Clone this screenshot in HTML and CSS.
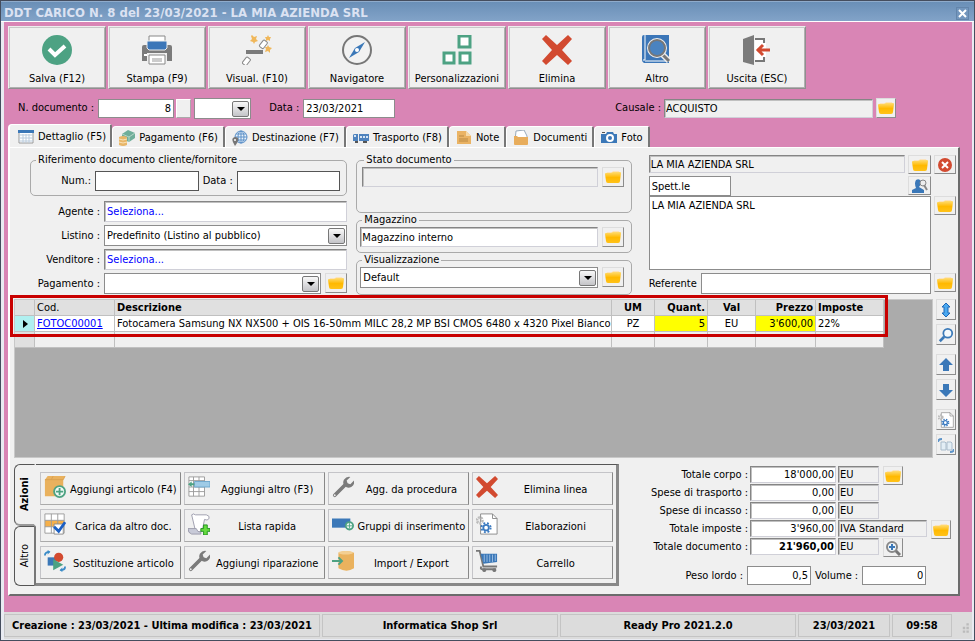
FILE: index.html
```
<!DOCTYPE html>
<html lang="it">
<head>
  <meta charset="UTF-8">
  <meta name="viewport" content="width=device-width, initial-scale=1.0">
  <title>DDT CARICO N. 8 del 23/03/2021 - LA MIA AZIENDA SRL</title>
  <link rel="stylesheet" href="styles.css">
</head>
<body>

  <!-- shared icons -->
  <svg class="sprite" aria-hidden="true">
    <linearGradient id="gold" x1="0" y1="0" x2="0" y2="1">
      <stop offset="0" stop-color="#ffdc73"/>
      <stop offset="0.5" stop-color="#ffb900"/>
      <stop offset="1" stop-color="#ffc21a"/>
    </linearGradient>
    <symbol id="folder" viewBox="0 0 16 16">
      <path d="M1 5l1-2h5l1-1h6l1 3v2H1z" fill="#fbe3bd"/>
      <path d="M0 5q0-1 1-1h5l2-1h7q1 0 1 1l-1 8q0 2-2 2H3q-2 0-2-2z" fill="url(#gold)"/>
    </symbol>
    <symbol id="cross" viewBox="0 0 30 30">
      <path d="M4 0l11 10L26 0l4 4-10 11 10 11-4 4-11-10L4 30l-4-4 10-11L0 4z" fill="#d24a30"/>
    </symbol>
    <symbol id="wrench" viewBox="0 0 24 24">
      <path d="M3 21L15 9" stroke="#7b7b7b" stroke-width="4" stroke-linecap="round"/>
      <path d="M20 1l-4 4 1 3 3 1 4-4q1 5-3 7-4 2-7-1-3-3-1-7 3-4 7-3z" fill="#7b7b7b"/>
      <circle cx="3" cy="21" r="1" fill="#eee"/>
    </symbol>
    <symbol id="lens" viewBox="0 0 18 18">
      <circle cx="11" cy="7" r="5" fill="#f5fafd" stroke="#3b7ab8" stroke-width="2"/>
      <path d="M7 11l-5 5" stroke="#3b7ab8" stroke-width="3"/>
    </symbol>
    <symbol id="up" viewBox="0 0 16 16">
      <path d="M8 1l7 7h-4v6H5V8H1z" fill="#3b78b8"/>
    </symbol>
    <symbol id="cog" viewBox="0 0 24 24">
      <path d="M5 1h13l5 5v17H5z" fill="#fff" stroke="#888"/>
      <path d="M18 1v5h5" fill="none" stroke="#888"/>
      <circle cx="4" cy="8" r="3" fill="none" stroke="#bbb" stroke-width="3" stroke-dasharray="2 1"/>
      <circle cx="11" cy="16" r="3" fill="#fff" stroke="#3b7ac0" stroke-width="2"/>
      <circle cx="11" cy="16" r="5" fill="none" stroke="#3b7ac0" stroke-width="2" stroke-dasharray="2 2"/>
    </symbol>
  </svg>

  <div class="window">
    <header class="titlebar">
      <h1>DDT CARICO N. 8 del 23/03/2021 - LA MIA AZIENDA SRL</h1>
      <button class="close" aria-label="Chiudi">
        <svg viewBox="0 0 9 9"><path d="M1 1l7 7M8 1L1 8" stroke="#fff" stroke-width="2"/></svg>
      </button>
    </header>

    <main>
      <nav class="toolbar">
        <button>
          <svg viewBox="0 0 30 30"><circle cx="15" cy="15" r="15" fill="#4da283"/><path d="M7 14l6 6 10-9" fill="none" stroke="#fff" stroke-width="4"/></svg>
          Salva (F12)
        </button>
        <button>
          <svg viewBox="0 0 30 30">
            <path d="M2 10h26q2 0 2 2v14H0V12q0-2 2-2z" fill="#7b7b7b"/>
            <path d="M7 1h16v6H7z" fill="#fff" stroke="#888"/>
            <path d="M6 19h18v10H6z" fill="#fff" stroke="#f0f0f0" stroke-width="2"/><path d="M7 20h16v9H7z" fill="#fff" stroke="#888"/>
            <path d="M5 6h20v7l-2 2H7l-2-2z" fill="#3b76b8" stroke="#eee"/>
            <path d="M10 24h10M10 26h10" stroke="#999"/><path d="M2 20h3" stroke="#fff" stroke-width="2"/>
          </svg>
          Stampa (F9)
        </button>
        <button>
          <svg viewBox="0 0 30 30">
            <path d="M4 15h17v4H4z" fill="#7b7b7b"/>
            <g fill="#fff" stroke="#888"><rect x="-2" y="-4" width="5" height="8" rx="1" transform="translate(21 9) rotate(38)"/><rect x="-2" y="-4" width="5" height="8" rx="1" transform="translate(4 26) rotate(38)"/></g>
            <path d="M10 0l2 2 3-1-1 3 2 2-3 1-1 2-1-2-3-1 2-2-1-3zM26 0l1 2 2 0-1 2 0 2-2-1-2 1 0-2-1-2 2 0zM26 10l1 2 3 1-2 2 0 3-2-2-3 1 1-3-1-2 2 0z" fill="#f0b75a"/>
          </svg>
          Visual. (F10)
        </button>
        <button>
          <svg viewBox="0 0 30 30"><circle cx="15" cy="15" r="14" fill="#f2f2f2" stroke="#777" stroke-width="2"/><path d="M23 7l-6 10L7 23l6-10z" fill="#3b78b8"/><circle cx="15" cy="15" r="2" fill="#fff"/></svg>
          Navigatore
        </button>
        <button>
          <svg viewBox="0 0 30 30"><path d="M17 1h11v11H17zM2 18h10v10H2zM18 18h10v10H18z" fill="#fff" stroke="#4da283" stroke-width="3"/></svg>
          Personalizzazioni
        </button>
        <button>
          <svg><use href="#cross"/></svg>
          Elimina
        </button>
        <button>
          <svg viewBox="0 0 30 30">
            <path d="M2 0h25v28H2q-2-1-2-3V2q0-2 2-2z" fill="#3b76b8"/><path d="M3 0v25H1M3 26h23" stroke="#fff" fill="none"/>
            <path d="M20 19l7 7" stroke="#eee" stroke-width="6"/><path d="M20 19l7 7" stroke="#777" stroke-width="3"/>
            <circle cx="15" cy="13" r="8" fill="#3b76b8" stroke="#eee" stroke-width="4"/><circle cx="15" cy="13" r="8" fill="#4a83c0" stroke="#777" stroke-width="2"/>
          </svg>
          Altro
        </button>
        <button>
          <svg viewBox="0 0 30 30">
            <path d="M13 4h9v22h-9" fill="#fff" stroke="#777" stroke-width="2"/>
            <path d="M20 8h4v14h-4z" fill="#fff"/>
            <path d="M1 4l11-4v30L1 27z" fill="#7b7b7b"/>
            <path d="M15 15h13M21 10l-5 5 5 5" fill="none" stroke="#d24a30" stroke-width="3"/>
          </svg>
          Uscita (ESC)
        </button>
      </nav>

      <div class="docrow">
        <label for="ndoc">N. documento :</label>
        <input class="ndoc num" id="ndoc" value="8">
        <button class="blank" aria-label="Numerazione"></button>
        <span class="select serie"><select aria-label="Serie"><option></option></select></span>
        <label class="l-data" for="data">Data :</label>
        <input class="data" id="data" value="23/03/2021">
        <div class="causale">
          <label for="causale">Causale :</label>
          <input class="sunken" id="causale" value="ACQUISTO" readonly>
          <button class="mini" aria-label="Scegli causale"><svg><use href="#folder"/></svg></button>
        </div>
      </div>

      <div class="tabs" role="tablist">
        <button class="tab active" role="tab" aria-selected="true">
          <svg viewBox="0 0 16 16"><path d="M1 2h14v12H1z" fill="#fff" stroke="#999"/><path d="M1 6h14M1 9h14M1 12h14M5 5v9M8 5v9M11 5v9" stroke="#bcd"/><path d="M0 1h16v3H0z" fill="#3b78b8"/></svg>
          Dettaglio (F5)
        </button>
        <button class="tab" role="tab">
          <svg viewBox="0 0 16 16"><path d="M3 4l6-4 7 3v5l-6 4-7-3z" fill="#6fae9a"/><path d="M3 4l7 3 6-4M10 7v5" stroke="#b5d5c8" fill="none"/><path d="M0 7q4-2 8 0v8q-4 2-8 0z" fill="#e8b668"/><path d="M0 9q4 2 8 0M0 12q4 2 8 0" stroke="#f8e2b8" fill="none"/></svg>
          Pagamento (F6)
        </button>
        <button class="tab" role="tab">
          <svg viewBox="0 0 16 16"><circle cx="9" cy="7" r="6" fill="#eaf3fa" stroke="#5c90c8"/><path d="M3 7h12M9 1v12M4 4h10M4 10h10" stroke="#5c90c8"/><ellipse cx="9" cy="7" rx="3" ry="6" fill="none" stroke="#5c90c8"/><path d="M3 16Q-1 10 1 8q2-2 5 0 1 3-3 8z" fill="#777"/><circle cx="3" cy="10" r="1" fill="#fff"/></svg>
          Destinazione (F7)
        </button>
        <button class="tab" role="tab">
          <svg viewBox="0 0 16 16"><path d="M0 5q0-1 2-1h3v7H0zM6 4h10v7H6z" fill="#4e82bd"/><path d="M1 6h3M7 7h8" stroke="#d5e4f3" stroke-width="2" stroke-dasharray="2 1"/><path d="M2 12h3M10 12h4" stroke="#555" stroke-width="2"/></svg>
          Trasporto (F8)
        </button>
        <button class="tab" role="tab">
          <svg viewBox="0 0 16 16"><path d="M1 1h9l5 5v8H1z" fill="#eab364"/><path d="M10 1v5h5" fill="#f6d9a8"/><path d="M3 6h5M3 9h9M3 11h9" stroke="#b98945"/></svg>
          Note
        </button>
        <button class="tab" role="tab">
          <svg viewBox="0 0 16 16"><path d="M3 1l8-1 3 6v5H2z" fill="#fff" stroke="#9ab"/><path d="M1 6h3l1 1h10v7q0 1-1 1H2q-1 0-1-1z" fill="#e8ad5c"/></svg>
          Documenti
        </button>
        <button class="tab" role="tab">
          <svg viewBox="0 0 16 16"><path d="M0 4h5l1-2h6l1 2h3v9H0z" fill="#3b78b8"/><path d="M1 2h3v1H1z" fill="#555"/><circle cx="9" cy="8" r="3" fill="#3b78b8" stroke="#fff" stroke-width="2"/></svg>
          Foto
        </button>
      </div>

      <section class="panel">
        <div class="details">
          <div class="col-rif">
            <fieldset class="rif">
              <legend>Riferimento documento cliente/fornitore</legend>
              <label for="rnum">Num.:</label>
              <input id="rnum">
              <label for="rdata">Data :</label>
              <input id="rdata">
            </fieldset>
            <div class="line">
              <label for="agente">Agente :</label>
              <input class="sunken link" id="agente" value="Seleziona...">
            </div>
            <div class="line">
              <label for="listino">Listino :</label>
              <span class="select"><select id="listino"><option>Predefinito (Listino al pubblico)</option></select></span>
            </div>
            <div class="line">
              <label for="venditore">Venditore :</label>
              <input class="sunken link" id="venditore" value="Seleziona...">
            </div>
            <div class="line">
              <label for="pagamento">Pagamento :</label>
              <span class="select"><select id="pagamento"><option></option></select></span>
              <button class="mini wide" aria-label="Scegli pagamento"><svg><use href="#folder"/></svg></button>
            </div>
          </div>

          <div class="col-stato">
            <fieldset class="stato">
              <legend>Stato documento</legend>
              <input class="sunken" aria-label="Stato documento" readonly>
              <button class="mini wide" aria-label="Scegli stato"><svg><use href="#folder"/></svg></button>
            </fieldset>
            <fieldset>
              <legend>Magazzino</legend>
              <input class="sunken white" aria-label="Magazzino" value="Magazzino interno">
              <button class="mini wide" aria-label="Scegli magazzino"><svg><use href="#folder"/></svg></button>
            </fieldset>
            <fieldset class="vis">
              <legend>Visualizzazione</legend>
              <span class="select"><select aria-label="Visualizzazione"><option>Default</option></select></span>
              <button class="mini wide" aria-label="Scegli visualizzazione"><svg><use href="#folder"/></svg></button>
            </fieldset>
          </div>

          <div class="col-cliente">
            <input class="sunken c-nome" aria-label="Ragione sociale" value="LA MIA AZIENDA SRL" readonly>
            <button class="mini" aria-label="Apri cliente"><svg><use href="#folder"/></svg></button>
            <button class="mini" aria-label="Rimuovi cliente">
              <svg viewBox="0 0 16 16"><circle cx="8" cy="8" r="7" fill="#d24a30"/><path d="M5 5l6 6M11 5l-6 6" stroke="#fff" stroke-width="2"/></svg>
            </button>
            <input class="c-titolo" aria-label="Titolo" value="Spett.le">
            <button class="mini c-cerca" aria-label="Cerca cliente">
              <svg viewBox="0 0 16 16"><path d="M4 2q3-2 5 1 0 4-2 6l5 3v3H0v-3l4-2Q2 5 4 2z" fill="#3b78b8"/><circle cx="11" cy="5" r="3" fill="#eee" stroke="#888"/><path d="M12 7l3 5" stroke="#888" stroke-width="2"/></svg>
            </button>
            <textarea class="c-ind" aria-label="Indirizzo">LA MIA AZIENDA SRL</textarea>
            <button class="mini" aria-label="Scegli indirizzo"><svg><use href="#folder"/></svg></button>
            <div class="c-ref">
              <label for="referente">Referente</label>
              <input id="referente">
            </div>
            <button class="mini" aria-label="Scegli referente"><svg><use href="#folder"/></svg></button>
          </div>
        </div>

        <div class="gridrow">
          <div class="grid">
            <table>
              <colgroup>
                <col class="w-sel"><col class="w-cod"><col><col class="w-um"><col class="w-qta"><col class="w-val"><col class="w-prz"><col class="w-imp">
              </colgroup>
              <thead>
                <tr><th></th><th class="plain">Cod.</th><th>Descrizione</th><th class="mid">UM</th><th class="num">Quant.</th><th class="mid">Val</th><th class="num">Prezzo</th><th>Imposte</th></tr>
              </thead>
              <tbody>
                <tr>
                  <td class="current"><svg viewBox="0 0 6 8"><path d="M0 0l5 4-5 4z"/></svg></td>
                  <td><a href="#">FOTOC00001</a></td>
                  <td>Fotocamera Samsung NX NX500 + OIS 16-50mm MILC 28,2 MP BSI CMOS 6480 x 4320 Pixel Bianco</td>
                  <td class="mid">PZ</td>
                  <td class="num yellow">5</td>
                  <td class="mid">EU</td>
                  <td class="num yellow">3'600,00</td>
                  <td>22%</td>
                </tr>
                <tr class="empty"><td></td><td></td><td></td><td></td><td></td><td></td><td></td><td></td></tr>
              </tbody>
            </table>
            <div class="highlight"></div>
          </div>
          <div class="side">
            <button class="mini" aria-label="Altezza righe"><svg viewBox="0 0 16 16"><path d="M8 1l4 4h-2v6h2l-4 4-4-4h2V5H4z" fill="#4aa8f0" stroke="#1d68b8"/></svg></button>
            <button class="mini gap" aria-label="Cerca"><svg><use href="#lens"/></svg></button>
            <button class="mini" aria-label="Sposta su"><svg><use href="#up"/></svg></button>
            <button class="mini gap" aria-label="Sposta giù"><svg class="flip"><use href="#up"/></svg></button>
            <button class="mini" aria-label="Elabora riga"><svg><use href="#cog"/></svg></button>
            <button class="mini" aria-label="Duplica riga">
              <svg viewBox="0 0 16 16"><path d="M3 5h4l1 1v7H3zM9 5h4l1 1v7H9z" fill="#e3eef5" stroke="#a9bccb"/><path d="M0 5q0-3 4-3M16 12q0 3-4 3" fill="none" stroke="#5d93c8" stroke-width="2"/></svg>
            </button>
          </div>
        </div>

        <div class="bottom">
          <div class="actions">
            <div class="vtabs" role="tablist">
              <button class="vtab active" role="tab" aria-selected="true"><span>Azioni</span></button>
              <button class="vtab" role="tab"><span>Altro</span></button>
            </div>
            <div class="cmds">
              <button>
                <svg viewBox="0 0 24 24"><path d="M1 4l3-4h19l-2 4v18H1z" fill="#e9b15e"/><path d="M1 4h20l2-4M8 4l2-4" stroke="#d9a04e" fill="none"/><circle cx="17" cy="17" r="6" fill="#f3fbf7" stroke="#4da283" stroke-width="2"/><path d="M17 13v8M13 17h8" stroke="#4da283" stroke-width="2"/></svg>
                <span>Aggiungi articolo (F4)</span>
              </button>
              <button>
                <svg viewBox="0 0 24 24"><path d="M1 1h17v21H1zM1 5h17M1 12h17M1 17h17M6 1v21M12 1v21" fill="#fff" stroke="#999"/><path d="M7 6h17v6H7z" fill="#9fcbe6" stroke="#6ba5cc"/><path d="M0 9l4-3v2h3v2H4v2z" fill="#4da283"/></svg>
                <span>Aggiungi altro (F3)</span>
              </button>
              <button><svg><use href="#wrench"/></svg><span>Agg. da procedura</span></button>
              <button><svg><use href="#cross"/></svg><span>Elimina linea</span></button>
              <button>
                <svg viewBox="0 0 24 24"><path d="M1 1h21v21H1z" fill="#fff"/><path d="M1 8h21v7H1z" fill="#f6b04a"/><path d="M1 1h21v21H1zM1 8h21M1 15h21M8 1v21M15 1v21" fill="none" stroke="#999"/><path d="M11 12h10v11H11z" fill="#fff" stroke="#888"/><path d="M11 15l5 5 7-10" stroke="#1b5fc4" stroke-width="3" fill="none"/></svg>
                <span>Carica da altro doc.</span>
              </button>
              <button>
                <svg viewBox="0 0 24 24"><path d="M4 2q2-2 4 0h12q4 1 3 4-2 3-5 1l-2 10q-1 4-5 4L8 19z" fill="#fff" stroke="#99a"/><path d="M0 17h9q1 4 5 4v2H4q-4-1-4-6z" fill="#c8cad8" stroke="#99a"/><path d="M17 13h4v4h3v3h-3v4h-4v-4h-3v-3h3z" fill="#67dc3f" stroke="#1d8f1d"/></svg>
                <span>Lista rapida</span>
              </button>
              <button>
                <svg viewBox="0 0 24 24"><path d="M0 6h20v10H0z" fill="#3b78b8"/><circle cx="19" cy="14" r="4" fill="#f3fbf7" stroke="#4da283" stroke-width="2"/><path d="M19 11v6M16 14h6" stroke="#4da283"/></svg>
                <span>Gruppi di inserimento</span>
              </button>
              <button><svg><use href="#cog"/></svg><span>Elaborazioni</span></button>
              <button>
                <svg viewBox="0 0 24 24"><path d="M4 8h9v9H4z" fill="#3b78b8"/><circle cx="16" cy="8" r="5" fill="#d24a30"/><path d="M10 10l11 6-11 6z" fill="#4da283"/><path d="M1 6q0-4 5-4M23 18q0 4-5 4" fill="none" stroke="#3b8cc8" stroke-width="2"/><path d="M4 0l3 2-3 3zM20 19l-3 3 3 2z" fill="#3b8cc8"/></svg>
                <span>Sostituzione articolo</span>
              </button>
              <button><svg><use href="#wrench"/></svg><span>Aggiungi riparazione</span></button>
              <button>
                <svg viewBox="0 0 24 24"><path d="M7 3q8-4 17 0v17q-8 5-17 0z" fill="#eab25e"/><ellipse cx="15" cy="3" rx="8" ry="2" fill="#f4cf92"/><path d="M0 12h10M7 8l4 4-4 4" fill="none" stroke="#4da283" stroke-width="2"/></svg>
                <span>Import / Export</span>
              </button>
              <button>
                <svg viewBox="0 0 24 24"><path d="M0 1h4l4 17h15M6 18q-2 3 1 3h15" fill="none" stroke="#777" stroke-width="2"/><path d="M5 4h18v9L8 15z" fill="#3b78b8"/><path d="M9 5v8M12 5v8M15 5v8M18 5v8M21 5v7" stroke="#9cc0e4"/><circle cx="9" cy="22" r="2" fill="#777"/><circle cx="20" cy="22" r="2" fill="#777"/></svg>
                <span>Carrello</span>
              </button>
            </div>
          </div>

          <div class="totals">
            <div class="tot">
              <label for="t1">Totale corpo :</label>
              <input class="sunken white num" id="t1" value="18'000,00">
              <input class="sunken val" aria-label="Valuta corpo" value="EU" readonly>
              <button class="mini" aria-label="Dettaglio corpo"><svg><use href="#folder"/></svg></button>
            </div>
            <div class="tot">
              <label for="t2">Spese di trasporto :</label>
              <input class="sunken white num" id="t2" value="0,00">
              <input class="sunken val" aria-label="Valuta trasporto" value="EU" readonly>
            </div>
            <div class="tot">
              <label for="t3">Spese di incasso :</label>
              <input class="sunken white num" id="t3" value="0,00">
              <input class="sunken val" aria-label="Valuta incasso" value="EU" readonly>
            </div>
            <div class="tot">
              <label for="t4">Totale imposte :</label>
              <input class="sunken white num" id="t4" value="3'960,00">
              <input class="sunken iva" aria-label="Tipo IVA" value="IVA Standard" readonly>
              <button class="mini" aria-label="Dettaglio imposte"><svg><use href="#folder"/></svg></button>
            </div>
            <div class="tot">
              <label for="t5">Totale documento :</label>
              <input class="sunken white num strong" id="t5" value="21'960,00">
              <input class="sunken val" aria-label="Valuta documento" value="EU" readonly>
              <button class="mini" aria-label="Analisi totale">
                <svg viewBox="0 0 16 16"><path d="M10 10l5 5" stroke="#777" stroke-width="3"/><circle cx="7" cy="7" r="5" fill="#eef5fa" stroke="#888" stroke-width="2"/><path d="M7 4v6M4 7h6" stroke="#3b78b8" stroke-width="2"/></svg>
              </button>
            </div>
            <div class="peso">
              <label for="peso">Peso lordo :</label>
              <input class="num" id="peso" value="0,5">
              <label for="volume">Volume :</label>
              <input class="num" id="volume" value="0">
            </div>
          </div>
        </div>
      </section>
    </main>

    <footer class="status">
      <span class="s-mod">Creazione : 23/03/2021 - Ultima modifica : 23/03/2021</span>
      <span class="s-mid">Informatica Shop Srl</span>
      <span class="s-mid">Ready Pro 2021.2.0</span>
      <span class="s-date">23/03/2021</span>
      <span class="s-time">09:58</span>
      <svg class="grip" viewBox="0 0 10 10"><path d="M7 1h2v2H7zM4 4h2v2H4zM7 4h2v2H7zM4 7h2v2H4zM7 7h2v2H7z" fill="#bbb"/></svg>
    </footer>
  </div>

</body>
</html>
```
FILE: styles.css
```
* {
  box-sizing: border-box;
}

body {
  margin: 0;
  font: 11px/14px "DejaVu Sans Condensed", "DejaVu Sans", sans-serif;
  color: #000;
}

button, input, select, textarea {
  font: inherit;
  color: inherit;
  margin: 0;
  padding: 0;
  border-radius: 0;
}

input, textarea, select {
  background: #fff;
  border: 1px solid #8c8c8c;
  min-width: 0;
  padding: 0 2px;
}

label {
  white-space: nowrap;
}

svg {
  display: block;
  fill: none;
}

.sprite {
  position: absolute;
  width: 0;
  height: 0;
}

.num {
  text-align: right;
}

/* window frame */
.window {
  min-height: 100vh;
  display: flex;
  flex-direction: column;
  border: 1px solid #454d5e;
  background: #e9ebf2;
}

.titlebar {
  display: flex;
  align-items: center;
  justify-content: space-between;
  height: 21px;
  padding: 3px 6px 0 3px;
  background: linear-gradient(#6a8fb7, #82a3c8);
  border-top: 1px solid #8fabcb;
  border-bottom: 1px solid #fff;
}

.titlebar h1 {
  margin: 0;
  font-size: 13px;
  color: #dbe2f2;
}

.close {
  width: 11px;
  height: 11px;
  padding: 1px;
  background: #7396bd;
  border: 0;
  outline: 1px solid #6385ab;
}

main {
  flex: 1;
  display: flex;
  flex-direction: column;
  margin: 0 2px 0 3px;
  padding: 4px 12px 16px 4px;
  background: #d985b5;
}

/* toolbar */
.toolbar {
  display: flex;
  gap: 2px;
}

.toolbar button {
  display: flex;
  flex-direction: column;
  align-items: center;
  gap: 7px;
  width: 98px;
  height: 63px;
  padding-top: 8px;
  background: #f0f0f0;
  border: 1px solid;
  border-color: #eee #8f8f8f #8f8f8f #eee;
  box-shadow: inset 1px 1px #c8c8c8, inset -1px -1px #b0b0b0;
}

.toolbar svg {
  width: 30px;
  height: 30px;
}

/* document header */
.docrow {
  display: flex;
  align-items: center;
  height: 20px;
  margin: 9px 0 6px 10px;
}

.docrow input {
  height: 19px;
}

.ndoc {
  width: 76px;
  margin: 0 2px 0 4px;
}

.blank {
  width: 15px;
  height: 19px;
  margin-right: 3px;
  background: #f0f0f0;
  border: 1px solid #aaa;
  border-left-color: #fff;
  border-top-color: #fff;
}

.serie {
  width: 57px;
}

.l-data {
  margin: 0 4px 0 18px;
}

.data {
  width: 92px;
}

.causale {
  display: flex;
  align-items: center;
  gap: 3px;
  margin: 0 64px 0 auto;
}

.causale input {
  width: 209px;
}

.select {
  position: relative;
  display: flex;
  height: 21px;
  flex: 1;
}

.serie.select {
  flex: none;
}

.select select {
  appearance: none;
  width: 100%;
}

.select::after {
  content: "";
  position: absolute;
  top: 3px;
  right: 2px;
  width: 15px;
  bottom: 2px;
  border: 1px solid #777;
  border-radius: 2px;
  background: linear-gradient(#f8f8f8, #c4c4c8);
  pointer-events: none;
}

.select::before {
  content: "";
  position: absolute;
  z-index: 1;
  right: 6px;
  top: 9px;
  border: 4px solid transparent;
  border-top-color: #000;
  border-bottom: 0;
  pointer-events: none;
}

.sunken {
  background: #f0f0f0;
  border: 1px solid;
  border-color: #858585 #d0d0d8 #d0d0d8 #858585;
  box-shadow: inset 1px 1px #c0c0c0;
  padding: 0 1px;
}

.white, .link {
  background: #fff;
}

.link {
  color: #00f;
  padding-left: 2px;
}

.mini {
  display: flex;
  align-items: center;
  justify-content: center;
  flex: none;
  width: 20px;
  height: 20px;
  background: #f0f0f0;
  border: 1px solid;
  border-color: #ddd #8c8c8c #8c8c8c #ddd;
}

.mini svg {
  width: 16px;
  height: 16px;
}

.wide {
  width: 22px;
}

/* main tabs */
.tabs {
  display: flex;
  align-items: flex-end;
}

.tab {
  display: flex;
  align-items: center;
  gap: 4px;
  height: 21px;
  padding: 2px 5px 0 6px;
  background: #f0f0f0;
  border: solid;
  border-width: 1px 2px 0 1px;
  border-color: #fff #777 #fff #fff;
  border-radius: 4px 2px 0 0;
  white-space: nowrap;
}

.tab svg {
  width: 16px;
  height: 16px;
}

.tab.active {
  height: 23px;
  padding: 1px 4px 0 8px;
  border-left-width: 2px;
}

.panel {
  flex: 1;
  display: flex;
  flex-direction: column;
  padding: 6px 2px 8px 4px;
  background: #f0f0f0;
  border: 2px solid;
  border-top-width: 1px;
  border-color: #fff #6b6b6b #6b6b6b #fff;
}

/* header fields */
.details {
  display: grid;
  grid-template-columns: minmax(0, 317fr) minmax(0, 275fr) minmax(0, 315fr);
  column-gap: 9px;
  padding-left: 16px;
}

fieldset {
  display: flex;
  min-width: 0;
  height: 39px;
  margin: 0 0 1px;
  padding: 1px 7px 0 3px;
  border: 1px solid #aaa;
  border-radius: 5px;
}

fieldset .mini {
  margin-left: 4px;
}

legend {
  height: 12px;
  margin-left: 2px;
  padding: 0 2px;
  line-height: 12px;
}

.rif {
  align-items: center;
  gap: 4px;
  height: 42px;
  margin-bottom: 5px;
  padding: 0 6px 0 5px;
}

.rif legend {
  margin-left: 0;
}

.rif label:first-of-type {
  flex: none;
  width: 55px;
  text-align: right;
}

.rif input {
  flex: 1;
  height: 20px;
  border-color: #555;
}

.line {
  display: flex;
  gap: 4px;
  margin-bottom: 3px;
}

.line label {
  width: 70px;
  text-align: right;
  line-height: 21px;
}

.line input {
  flex: 1;
  height: 21px;
}

.col-stato input {
  flex: 1;
  height: 20px;
}

.stato {
  height: 59px;
  padding-left: 5px;
}

.vis {
  height: 41px;
}

.col-cliente {
  display: grid;
  grid-template-columns: 1fr 23px 22px;
  column-gap: 3px;
  align-content: start;
  margin-left: 8px;
  padding-top: 1px;
}

.col-cliente .mini {
  width: auto;
  height: 19px;
}

.c-nome {
  height: 18px;
}

.c-titolo {
  grid-column: 1;
  width: 82px;
  height: 20px;
  margin-top: 2px;
}

.c-cerca {
  margin-top: 2px;
}

.c-ind {
  grid-column: 1 / 3;
  height: 74px;
  resize: none;
  padding-top: 2px;
}

.c-ref {
  grid-column: 1 / 3;
  display: flex;
  align-items: center;
  gap: 4px;
  margin-top: 3px;
}

.c-ref input {
  flex: 1;
  height: 21px;
}

.c-ref + .mini {
  margin-top: 3px;
}

/* rows grid */
.gridrow {
  flex: 1;
  display: flex;
  gap: 3px;
  margin-top: 2px;
}

.grid {
  position: relative;
  flex: 1;
  padding-right: 48px;
  background: #ababab;
  border: 1px solid #c8c8c8;
}

table {
  width: 100%;
  table-layout: fixed;
  border-collapse: separate;
  border-spacing: 0;
}

th, td {
  height: 16px;
  padding: 0 2px;
  line-height: 15px;
  text-align: left;
  white-space: nowrap;
  overflow: hidden;
  background: #fff;
  border: solid #c0c0c0;
  border-width: 0 1px 1px 0;
}

th {
  background: #e0e0e0;
}

th.num, td.num {
  text-align: right;
}

th.mid, td.mid {
  text-align: center;
}

.plain {
  font-weight: normal;
}

.w-sel { width: 20px; }
.w-cod { width: 80px; }
.w-um { width: 43px; }
.w-qta { width: 53px; }
.w-val { width: 48px; }
.w-prz { width: 60px; }
.w-imp { width: 68px; }

td.yellow {
  background: #ff0;
}

td.current {
  background: #b0f0f0;
  padding-left: 8px;
}

.current svg {
  width: 6px;
  height: 8px;
  fill: #000;
}

td a {
  color: #00f;
}

.empty td {
  background: #f0f0f0;
}

.empty td:first-child {
  background: #e0e0e0;
}

.highlight {
  position: absolute;
  left: -5px;
  right: 44px;
  top: -5px;
  height: 42px;
  border: 3px solid #c80000;
  pointer-events: none;
}

.side {
  display: flex;
  flex-direction: column;
  gap: 4px;
}

.side .mini {
  height: 21px;
}

.side .gap {
  margin-bottom: 5px;
}

.flip {
  transform: rotate(180deg);
}

/* actions and totals */
.bottom {
  display: flex;
  justify-content: space-between;
  margin-top: 6px;
}

.actions {
  display: flex;
  flex: 1;
  max-width: 680px;
}

.vtabs {
  width: 22px;
  display: flex;
  flex-direction: column;
  z-index: 1;
}

.vtab {
  flex: 1;
  display: flex;
  align-items: center;
  justify-content: center;
  background: #f0f0f0;
  border: 1px solid #555;
  border-right: 2px solid #777;
  border-radius: 6px 0 0 6px;
}

.vtab.active {
  border-right-color: #f0f0f0;
  border-bottom: 2px solid #999;
  font-weight: bold;
}

.vtab span {
  writing-mode: vertical-rl;
  transform: rotate(180deg);
}

.cmds {
  flex: 1;
  display: grid;
  grid-template-columns: repeat(4, 1fr);
  gap: 4px 3px;
  padding: 7px 3px 4px 4px;
  border: solid;
  border-width: 1px 3px 3px 0;
  border-color: #555 #888 #888;
}

.cmds button {
  display: flex;
  align-items: center;
  height: 33px;
  padding: 0 3px;
  background: #f0f0f0;
  border: 1px solid;
  border-color: #c4c4c8 #888 #aaa #c4c4c8;
  white-space: nowrap;
}

.cmds svg {
  flex: none;
  width: 22px;
  height: 22px;
  margin-bottom: 3px;
}

.cmds span {
  flex: 1;
  padding: 3px 0 0 4px;
  text-align: center;
}

.totals {
  width: 305px;
  margin-left: 32px;
  padding-top: 2px;
}

.tot {
  display: flex;
  gap: 2px;
  height: 18px;
}

.tot label {
  width: 97px;
  text-align: right;
  line-height: 18px;
}

.tot input {
  width: 86px;
  height: 17px;
}

.tot .val {
  width: 41px;
}

.tot .iva {
  width: 89px;
}

.tot .mini {
  margin-left: 2px;
  height: 19px;
}

.strong {
  font-weight: bold;
}

.peso {
  display: flex;
  align-items: center;
  gap: 4px;
  margin-top: 10px;
}

.peso label:first-child {
  width: 92px;
  text-align: right;
}

.peso input {
  width: 64px;
  height: 19px;
}

/* status bar */
.status {
  display: flex;
  gap: 2px;
  height: 27px;
  margin: 0 2px 1px 3px;
  padding: 2px 0;
  background: #dcdcdc;
  font-weight: bold;
  text-align: center;
  line-height: 21px;
  white-space: nowrap;
}

.status span {
  border: 1px solid #c4c4c4;
}

.s-mod { width: 316px; }
.s-mid { flex: 1; }
.s-date { width: 92px; }
.s-time { width: 60px; }

.grip {
  width: 12px;
  height: 12px;
  margin: 8px 2px 0 4px;
}
```
